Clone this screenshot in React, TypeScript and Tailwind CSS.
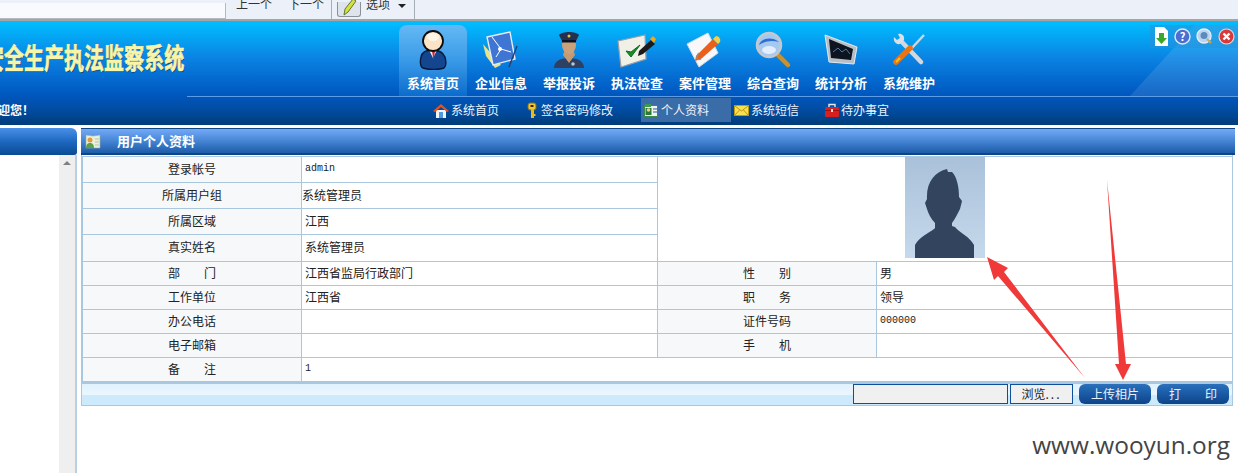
const navItems = [
  { label: "系统首页", icon: <UserIcon /> },
  { label: "企业信息", icon: <DocsIcon /> },
  { label: "举报投诉", icon: <OfficerIcon /> },
  { label: "执法检查", icon: <CheckIcon /> },
  { label: "案件管理", icon: <PenIcon /> },
  { label: "综合查询", icon: <SearchIcon /> },
  { label: "统计分析", icon: <MonitorIcon /> },
  { label: "系统维护", icon: <ToolsIcon /> },
];

function UserIcon() {
  return (
    <svg width="30" height="40" viewBox="0 0 30 40">
      <path d="M5 38c-3-1-3-7-2-11 1-5 4-7 11-7s11 2 13 7c1 4 2 9-1 11-5 2-16 2-21 0z" fill="#14468f" stroke="#071a3c" strokeWidth="1.4" />
      <path d="M11 20l4 8 4-8z" fill="#eef2f8" />
      <path d="M14 21h3l-1.500 9z" fill="#d3212f" />
      <circle cx="15" cy="11" r="10" fill="#fbe4c6" stroke="#0c0c0c" strokeWidth="1.800" />
      <ellipse cx="15" cy="7" rx="6" ry="4" fill="#fff6e8" />
    </svg>
  );
}

function DocsIcon() {
  return (
    <svg width="36" height="38" viewBox="0 0 36 38">
      <path d="M0 13l18 21-6 3L3 25z" fill="#e8e48c" />
      <path d="M4 6l23-5 5 27-22 6z" fill="#3f76d4" stroke="#e4edf9" strokeWidth="1.400" />
      <path d="M9 6l9 12 10 3M18 18l-5 8" stroke="#fff" strokeWidth="1" fill="none" />
      <circle cx="17" cy="18" r="2" fill="#fff" />
      <path d="M34 15l-8 21" stroke="#24406e" strokeWidth="1.500" />
    </svg>
  );
}

function OfficerIcon() {
  return (
    <svg width="32" height="38" viewBox="0 0 32 38">
      <path d="M1 37c0-6 5-10 15-10s15 4 15 10z" fill="#2f4060" />
      <path d="M10 24l6 8 6-8-2-6h-8z" fill="#c49a74" />
      <ellipse cx="16" cy="14" rx="7" ry="9" fill="#c9a27c" />
      <path d="M6 4c3-4 17-4 20 0l-3 6H9z" fill="#25304e" />
      <rect x="9" y="9" width="14" height="2.500" fill="#0c1226" />
      <circle cx="16" cy="5" r="1.500" fill="#e8c050" />
      <circle cx="20" cy="33" r="1.800" fill="#b8c4d8" />
    </svg>
  );
}

function CheckIcon() {
  return (
    <svg width="40" height="38" viewBox="0 0 40 38">
      <path d="M1 10l27-6 1 24-25 8z" fill="#f0f0e6" stroke="#9aa0a6" strokeWidth="1.200" />
      <path d="M9 20l5 6 9-12-9 7z" fill="#1f8a2c" stroke="#0f6a20" />
      <path d="M22 20l12-11 4 4-12 10-5 2z" fill="#1b1b1b" />
      <path d="M33 8l3-3 3 3-2 4z" fill="#e8a820" />
    </svg>
  );
}

function PenIcon() {
  return (
    <svg width="38" height="36" viewBox="0 0 38 36">
      <path d="M1 12L22 1l10 20-19 14z" fill="#f8f8fa" stroke="#d4d8e0" />
      <path d="M10 24L27 7l5 5-17 15-6 2z" fill="#e8601c" />
      <path d="M27 7l3-3c3 0 5 3 4 6l-2 2z" fill="#f6d040" />
      <path d="M13 21c-4 4-2 8 2 6" stroke="#909090" strokeWidth="1.200" fill="none" />
    </svg>
  );
}

function SearchIcon() {
  return (
    <svg width="38" height="38" viewBox="0 0 38 38">
      <path d="M23 23l11 11" stroke="#d09028" strokeWidth="4.500" strokeLinecap="round" />
      <circle cx="15" cy="14" r="12" fill="#a4c8f0" stroke="#c4c8d0" strokeWidth="2.500" />
      <path d="M5 14C7 7 18 5 25 11c-7-2-14-1-20 3z" fill="#2f6fd0" />
      <ellipse cx="15" cy="19" rx="7" ry="4" fill="#e2eefc" />
    </svg>
  );
}

function MonitorIcon() {
  return (
    <svg width="34" height="32" viewBox="0 0 34 32">
      <path d="M1 1l32 12-3 17-25-2z" fill="#b8bec6" stroke="#e8eaee" />
      <path d="M5 5l24 10-2 11-20-2z" fill="#0d1420" />
      <path d="M9 18l5-4 4 4 4-3 4 5" stroke="#4d7a9a" strokeWidth="1" fill="none" />
    </svg>
  );
}

function ToolsIcon() {
  return (
    <svg width="34" height="34" viewBox="0 0 34 34">
      <path d="M9 8l20 21" stroke="#d4d8de" strokeWidth="4.500" strokeLinecap="round" />
      <path d="M6 1c3-1 7 1 6 6l-4 4c-4 1-7-3-6-7l3 3 3-2z" fill="#dcdfe4" />
      <path d="M32 2L19 16" stroke="#d0d4da" strokeWidth="2.500" />
      <path d="M18 15L4 29" stroke="#e87414" strokeWidth="5.500" strokeLinecap="round" />
      <path d="M8 25l-4 4" stroke="#f4c020" strokeWidth="2" />
    </svg>
  );
}

function HomeIcon() {
  return (
    <svg width="16" height="15" viewBox="0 0 16 15">
      <path d="M3 7h10v8H3z" fill="#f4f4f4" />
      <rect x="6" y="9" width="4" height="6" fill="#4c9ae0" />
      <path d="M0 8l8-7 8 7-2 1-6-5-6 5z" fill="#e8501c" />
    </svg>
  );
}

function KeyIcon() {
  return (
    <svg width="11" height="17" viewBox="0 0 11 17">
      <rect x="1" y="1" width="8" height="7" rx="2" fill="#f0c830" stroke="#8a6a10" />
      <rect x="4" y="7" width="3" height="9" fill="#e8b820" />
      <rect x="6" y="12" width="2.500" height="2" fill="#e8b820" />
      <rect x="3.500" y="3" width="3" height="2" fill="#3a2a08" />
    </svg>
  );
}

function CardIcon() {
  return (
    <svg width="14" height="13" viewBox="0 0 14 13">
      <rect x="0.500" y="1.500" width="13" height="11" fill="#f0f4e8" stroke="#3a8a4a" />
      <rect x="1" y="0" width="6" height="3" fill="#3a9a50" />
      <rect x="1.500" y="4" width="6" height="7" fill="#2a7a3a" />
      <circle cx="4.500" cy="6" r="1.800" fill="#f0c890" />
      <path d="M9 5h4M9 8h4" stroke="#5a90c8" strokeWidth="1.400" />
    </svg>
  );
}

function MailIcon() {
  return (
    <svg width="15" height="11" viewBox="0 0 15 11">
      <rect x="0.500" y="0.500" width="14" height="10" fill="#f8e050" stroke="#c09a10" />
      <path d="M1 1l6.500 5L14 1M1 10l4.500-5M14 10L9.500 5" stroke="#c09a10" fill="none" />
    </svg>
  );
}

function ToolboxIcon() {
  return (
    <svg width="14" height="14" viewBox="0 0 14 14">
      <path d="M4 4V1.500h6V4" stroke="#e8e8e8" strokeWidth="1.400" fill="none" />
      <rect x="0" y="4" width="14" height="10" rx="1" fill="#d81f1f" />
      <rect x="0" y="7" width="14" height="1" fill="#a01010" />
      <rect x="6" y="6" width="2" height="3" fill="#f8d8d8" />
    </svg>
  );
}

function PanelFolderIcon() {
  return (
    <svg width="16" height="15" viewBox="0 0 16 15">
      <path d="M1 1l7 1 7-1v13H1z" fill="#e8f0dc" stroke="#9cb088" strokeWidth="0.600" />
      <circle cx="5" cy="6" r="2.500" fill="#e09a40" />
      <path d="M1 14c0-4 2-5 4-5s4 1 4 5z" fill="#5aa04a" />
      <path d="M10 5h4M10 8h4M10 11h4" stroke="#b8c4b0" />
    </svg>
  );
}

function Pencil() {
  return (
    <svg width="16" height="18" viewBox="0 0 16 18">
      <path d="M3 17l1-6 8-10 3 2-8 11z" fill="#d8e040" stroke="#5a7a30" />
    </svg>
  );
}

function WinButtons() {
  return (
    <div className="flex h-[23px] w-[88px] items-center gap-[5px] bg-[#2a8fd8]/50 pl-[4px]">
      <svg width="15" height="19" viewBox="0 0 15 19">
        <path d="M1 0h9l4 4v15H1z" fill="#fff" />
        <path d="M5 6h5v5h3l-5.500 6L2 11h3z" fill="#3aa82a" />
      </svg>
      <svg width="17" height="17" viewBox="0 0 17 17">
        <circle cx="8.500" cy="8.500" r="7.500" fill="#4a6fd0" stroke="#dfe8f8" strokeWidth="1.400" />
        <text x="8.500" y="12.500" fontSize="11" fontWeight="700" fill="#fff" textAnchor="middle">?</text>
      </svg>
      <svg width="17" height="17" viewBox="0 0 17 17">
        <circle cx="8" cy="8" r="7" fill="#bcd4ee" stroke="#e4eefa" strokeWidth="1.400" />
        <circle cx="8" cy="7.500" r="3.500" fill="#5a8ac0" />
        <path d="M11 11l4 4" stroke="#d8a830" strokeWidth="2" />
      </svg>
      <svg width="17" height="17" viewBox="0 0 17 17">
        <circle cx="8.500" cy="8.500" r="7.500" fill="#d83a3a" stroke="#f0d0d0" strokeWidth="1.200" />
        <path d="M5.500 5.500l6 6M11.500 5.500l-6 6" stroke="#fff" strokeWidth="2.400" />
      </svg>
    </div>
  );
}

function Label({ children }: { children: string }) {
  return <td className="border border-[#a9c8e0] bg-[#f7f8fa] pb-[2px] text-center">{children}</td>;
}

function Value({ children, flush, mono, span }: { children?: string; flush?: boolean; mono?: boolean; span?: number }) {
  return (
    <td
      colSpan={span}
      className={`border border-[#a9c8e0] bg-white pb-[2px] ${flush ? "pl-0" : "pl-[3px]"} ${mono ? "font-['Liberation_Mono',monospace] text-[10px]" : ""}`}
    >
      {children}
    </td>
  );
}

export default function App() {
  return (
    <div className="relative h-[473px] w-[1238px] overflow-hidden bg-white font-['Noto_Sans_CJK_SC','Liberation_Sans',sans-serif] text-[12px] text-[#222]">
      {/* browser find bar, cut off by the screenshot */}
      <div className="flex h-[19px] items-end overflow-hidden bg-[#ecf0f8] leading-[12px]">
        <div className="h-[16px] w-[226px] border-r border-b border-[#b4b8c0] bg-[#f8fafe]" />
        <span className="mb-[9px] ml-[10px] text-[#333]">上一个</span>
        <span className="mb-[9px] ml-[16px] text-[#333]">下一个</span>
        <div className="ml-[7px] h-[19px] w-px bg-[#a8acb4]" />
        <div className="ml-[5px] mb-[2px] flex h-[15px] w-[24px] items-end justify-center rounded-b-[3px] border border-t-0 border-[#8c9098] bg-[#dfe4ec]">
          <Pencil />
        </div>
        <span className="mb-[9px] ml-[5px] text-[#333]">选项</span>
        <div className="mb-[11px] ml-[8px] h-0 w-0 border-x-[4px] border-t-[4px] border-x-transparent border-t-[#222]" />
        <div className="ml-[8px] h-[19px] w-px bg-[#a8acb4]" />
      </div>
      <div className="h-[2px] bg-[#a8a4a4]" />

      {/* header */}
      <header className="relative h-[104px] overflow-hidden bg-[linear-gradient(180deg,#00bfff_0%,#0a84e4_35%,#0058c0_70%,#004a9c_88%,#003c78_100%)]">
        <div className="absolute right-0 bottom-[29px] h-[71px] w-[108px] bg-white/10 [clip-path:polygon(100%_0,60%_0,0_100%,100%_100%)]" />
        <div className="absolute top-[4px] right-0">
          <WinButtons />
        </div>
        <div className="relative flex h-[75px]">
          <div className="w-[399px] flex-none overflow-hidden pt-[19px]">
            <div className="ml-[-16px] w-[290px] origin-left scale-x-[0.715] text-[28px] leading-[34px] font-bold whitespace-nowrap text-[#f8f4a8] [-webkit-text-stroke:0.7px_#f8f4a8] [text-shadow:1px_1px_0_#0a3a70]">
              安全生产执法监察系统
            </div>
          </div>
          <nav className="flex pt-[4px]">
            {navItems.map((item, i) => (
              <div
                key={item.label}
                className={`flex h-[71px] w-[68px] flex-col items-center rounded-t-[8px] ${i === 0 ? "bg-[linear-gradient(180deg,#63b9f4_0%,#3a9ae8_50%,#0c6ccc_100%)]" : ""}`}
              >
                <div className="flex h-[50px] items-center justify-center">{item.icon}</div>
                <span className="text-[13px] leading-[16px] font-bold whitespace-nowrap text-white">{item.label}</span>
              </div>
            ))}
          </nav>
        </div>
        <div className="relative flex h-[29px]">
          <div className="w-[187px] flex-none overflow-hidden pt-[6px] leading-[16px] font-bold whitespace-nowrap text-white">
            <span className="ml-[-14px] inline-block">欢迎您！</span>
          </div>
          <div className="flex flex-1 items-center border-t border-[#5c9ce4] pb-[2px] text-[#eef4fc]">
            <div className="ml-[246px] flex items-center gap-[2px]">
              <HomeIcon />
              <span>系统首页</span>
            </div>
            <div className="ml-[28px] flex items-center gap-[3px]">
              <KeyIcon />
              <span>签名密码修改</span>
            </div>
            <div className="ml-[28px] flex h-[24px] w-[90px] items-center gap-[3px] bg-[#3a6ca8] pl-[3px]">
              <CardIcon />
              <span>个人资料</span>
            </div>
            <div className="ml-[3px] flex items-center gap-[2px]">
              <MailIcon />
              <span>系统短信</span>
            </div>
            <div className="ml-[26px] flex items-center gap-[2px]">
              <ToolboxIcon />
              <span>待办事宜</span>
            </div>
          </div>
        </div>
      </header>

      <div className="flex h-[348px] pt-[3px]">
        {/* left tree panel, empty here */}
        <aside className="flex w-[77px] flex-none flex-col">
          <div className="h-[27px] rounded-tr-[6px] rounded-br-[3px] bg-[linear-gradient(180deg,#4a90e8_0%,#1e68c0_50%,#0a4a94_100%)]" />
          <div className="flex flex-1 justify-end border-r-2 border-[#b8d0e4]">
            <div className="flex w-[16px] justify-center bg-[#efefef] pt-[6px]">
              <div className="h-0 w-0 border-x-[4px] border-b-[4px] border-x-transparent border-b-[#808080]" />
            </div>
          </div>
        </aside>

        <main className="ml-[4px] w-[1154px] flex-none">
          <div className="flex h-[27px] items-center border-t border-b-2 border-[#0e4684] bg-[linear-gradient(180deg,#74aaf8_0%,#4a88d8_45%,#1c5ca8_100%)] pl-[4px]">
            <PanelFolderIcon />
            <span className="ml-[16px] text-[13px] font-bold text-white">用户个人资料</span>
          </div>
          <div className="w-[1152px] border-x border-b border-[#a9c8e0] pt-[1px]">
            <table className="w-[1150px] table-fixed border-collapse">
              <colgroup>
                <col className="w-[219px]" />
                <col className="w-[356px]" />
                <col className="w-[219px]" />
                <col className="w-[356px]" />
              </colgroup>
              <tbody>
                <tr className="h-[26px]">
                  <Label>登录帐号</Label>
                  <Value mono>admin</Value>
                  <td rowSpan={4} colSpan={2} className="border border-[#a9c8e0] bg-white align-top">
                    <div className="flex justify-center">
                      <div className="ml-[-1px] h-[101px] w-[80px] bg-[linear-gradient(180deg,#a9c1d9_0%,#c6d9ec_100%)]">
                        <svg width="80" height="101" viewBox="0 0 80 101">
                          <path
                            d="M42 12l1 3 4 0c5 5 7 15 7 25l3 4-2 8c-2 4-5 10-8 14l0 3 3 1c5 6 15 10 19 18v13H10V88c4-8 14-12 19-16l1-1v-5c-4-4-7-10-8-14l-2-6 2-4C21 25 30 15 42 12z"
                            fill="#33445f"
                          />
                        </svg>
                      </div>
                    </div>
                  </td>
                </tr>
                <tr className="h-[26px]">
                  <Label>所属用户组</Label>
                  <Value flush>系统管理员</Value>
                </tr>
                <tr className="h-[26px]">
                  <Label>所属区域</Label>
                  <Value>江西</Value>
                </tr>
                <tr className="h-[27px]">
                  <Label>真实姓名</Label>
                  <Value>系统管理员</Value>
                </tr>
                <tr className="h-[24px]">
                  <Label>部　　门</Label>
                  <Value>江西省监局行政部门</Value>
                  <Label>性　　别</Label>
                  <Value>男</Value>
                </tr>
                <tr className="h-[24px]">
                  <Label>工作单位</Label>
                  <Value>江西省</Value>
                  <Label>职　　务</Label>
                  <Value>领导</Value>
                </tr>
                <tr className="h-[24px]">
                  <Label>办公电话</Label>
                  <Value />
                  <Label>证件号码</Label>
                  <Value mono>000000</Value>
                </tr>
                <tr className="h-[24px]">
                  <Label>电子邮箱</Label>
                  <Value />
                  <Label>手　　机</Label>
                  <Value />
                </tr>
                <tr className="h-[24px]">
                  <Label>备　　注</Label>
                  <Value mono span={3}>1</Value>
                </tr>
              </tbody>
            </table>
            <div className="flex h-[23px] items-center justify-end border-t-2 border-[#a9c8e0] bg-[linear-gradient(180deg,#e0f2fe_0%,#eaf6fe_50%,#cdeafc_55%,#cdeafc_100%)] pr-[3px] pb-[2px]">
              <div className="h-[20px] w-[155px] border border-[#0e4f9c] bg-[#f0f0f0]" />
              <div className="ml-[2px] flex h-[20px] w-[63px] items-center justify-center border border-[#0e4f9c] bg-[#f0f0f0]">
                浏览<span className="tracking-[2px]">...</span>
              </div>
              <button className="ml-[6px] h-[20px] w-[72px] rounded-[6px] bg-[linear-gradient(180deg,#2a70bc_0%,#1a5aa4_50%,#0e4488_100%)] text-[#e8f0fa]">上传相片</button>
              <button className="ml-[6px] h-[20px] w-[72px] rounded-[6px] bg-[linear-gradient(180deg,#2a70bc_0%,#1a5aa4_50%,#0e4488_100%)] text-[#e8f0fa]">打　　印</button>
            </div>
          </div>
          <div className="mt-[24px] mr-[5px] text-right font-['Open_Sans',sans-serif] text-[24.4px] leading-[30px] text-[#444]">www.wooyun.org</div>
        </main>
      </div>

      {/* red annotation arrows drawn over the page */}
      <svg className="absolute top-0 left-0" width="1238" height="473" viewBox="0 0 1238 473">
        <polygon points="987,257 1008,268 1004,272 1085,378 998,276 994,280" fill="#f03a3a" />
        <polygon points="1107,180 1126,364 1131,364 1123,380 1115,364 1119,364" fill="#f03a3a" />
      </svg>
    </div>
  );
}
